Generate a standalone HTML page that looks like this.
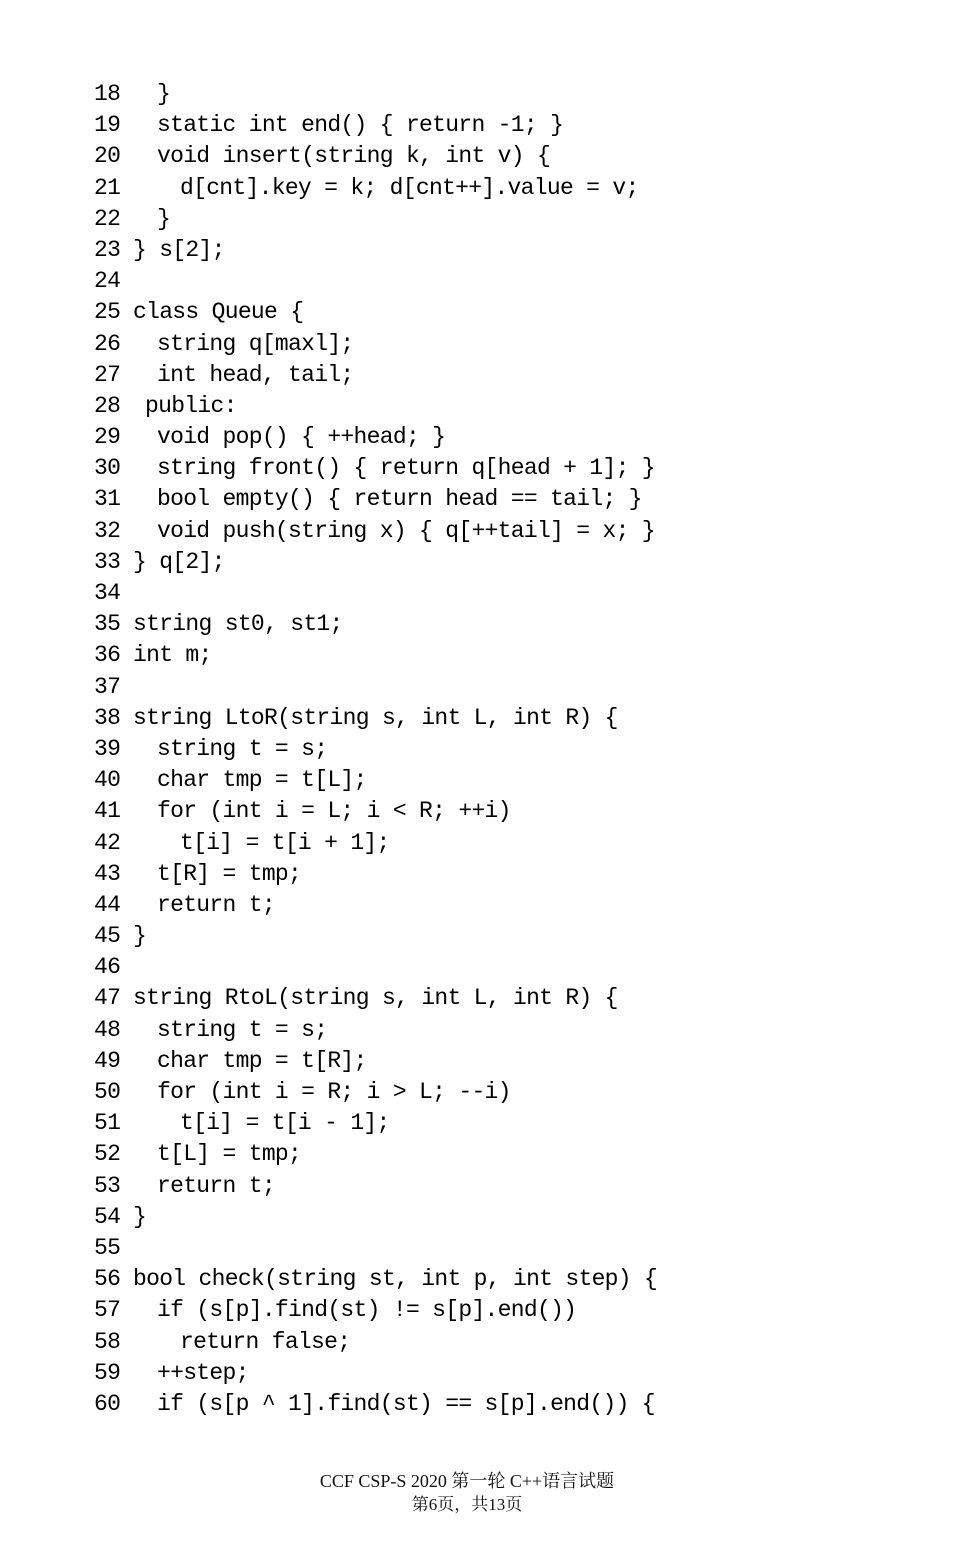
<!DOCTYPE html>
<html><head><meta charset="utf-8"><style>
body{margin:0;background:#fff;width:954px;height:1562px;position:relative;overflow:hidden}
.c{position:absolute;left:0;top:79px;font-family:"Liberation Mono",monospace;font-size:23px;letter-spacing:-0.7px;line-height:31.19px;color:#000}
.l{position:relative;height:31.19px;white-space:pre}
.n{position:absolute;left:94px}
.t{position:absolute}
.f{position:absolute;width:954px;left:-10px;text-align:center;font-family:"Liberation Serif","Noto Serif CJK SC",serif;font-size:18px;color:#111}
</style></head><body>
<div class="c">
<div class="l"><span class="n">18</span><span class="t" style="left:157px">}</span></div>
<div class="l"><span class="n">19</span><span class="t" style="left:157px">static int end() { return -1; }</span></div>
<div class="l"><span class="n">20</span><span class="t" style="left:157px">void insert(string k, int v) {</span></div>
<div class="l"><span class="n">21</span><span class="t" style="left:180px">d[cnt].key = k; d[cnt++].value = v;</span></div>
<div class="l"><span class="n">22</span><span class="t" style="left:157px">}</span></div>
<div class="l"><span class="n">23</span><span class="t" style="left:133px">} s[2];</span></div>
<div class="l"><span class="n">24</span></div>
<div class="l"><span class="n">25</span><span class="t" style="left:133px">class Queue {</span></div>
<div class="l"><span class="n">26</span><span class="t" style="left:157px">string q[maxl];</span></div>
<div class="l"><span class="n">27</span><span class="t" style="left:157px">int head, tail;</span></div>
<div class="l"><span class="n">28</span><span class="t" style="left:145px">public:</span></div>
<div class="l"><span class="n">29</span><span class="t" style="left:157px">void pop() { ++head; }</span></div>
<div class="l"><span class="n">30</span><span class="t" style="left:157px">string front() { return q[head + 1]; }</span></div>
<div class="l"><span class="n">31</span><span class="t" style="left:157px">bool empty() { return head == tail; }</span></div>
<div class="l"><span class="n">32</span><span class="t" style="left:157px">void push(string x) { q[++tail] = x; }</span></div>
<div class="l"><span class="n">33</span><span class="t" style="left:133px">} q[2];</span></div>
<div class="l"><span class="n">34</span></div>
<div class="l"><span class="n">35</span><span class="t" style="left:133px">string st0, st1;</span></div>
<div class="l"><span class="n">36</span><span class="t" style="left:133px">int m;</span></div>
<div class="l"><span class="n">37</span></div>
<div class="l"><span class="n">38</span><span class="t" style="left:133px">string LtoR(string s, int L, int R) {</span></div>
<div class="l"><span class="n">39</span><span class="t" style="left:157px">string t = s;</span></div>
<div class="l"><span class="n">40</span><span class="t" style="left:157px">char tmp = t[L];</span></div>
<div class="l"><span class="n">41</span><span class="t" style="left:157px">for (int i = L; i &lt; R; ++i)</span></div>
<div class="l"><span class="n">42</span><span class="t" style="left:180px">t[i] = t[i + 1];</span></div>
<div class="l"><span class="n">43</span><span class="t" style="left:157px">t[R] = tmp;</span></div>
<div class="l"><span class="n">44</span><span class="t" style="left:157px">return t;</span></div>
<div class="l"><span class="n">45</span><span class="t" style="left:133px">}</span></div>
<div class="l"><span class="n">46</span></div>
<div class="l"><span class="n">47</span><span class="t" style="left:133px">string RtoL(string s, int L, int R) {</span></div>
<div class="l"><span class="n">48</span><span class="t" style="left:157px">string t = s;</span></div>
<div class="l"><span class="n">49</span><span class="t" style="left:157px">char tmp = t[R];</span></div>
<div class="l"><span class="n">50</span><span class="t" style="left:157px">for (int i = R; i &gt; L; --i)</span></div>
<div class="l"><span class="n">51</span><span class="t" style="left:180px">t[i] = t[i - 1];</span></div>
<div class="l"><span class="n">52</span><span class="t" style="left:157px">t[L] = tmp;</span></div>
<div class="l"><span class="n">53</span><span class="t" style="left:157px">return t;</span></div>
<div class="l"><span class="n">54</span><span class="t" style="left:133px">}</span></div>
<div class="l"><span class="n">55</span></div>
<div class="l"><span class="n">56</span><span class="t" style="left:133px">bool check(string st, int p, int step) {</span></div>
<div class="l"><span class="n">57</span><span class="t" style="left:157px">if (s[p].find(st) != s[p].end())</span></div>
<div class="l"><span class="n">58</span><span class="t" style="left:180px">return false;</span></div>
<div class="l"><span class="n">59</span><span class="t" style="left:157px">++step;</span></div>
<div class="l"><span class="n">60</span><span class="t" style="left:157px">if (s[p ^ 1].find(st) == s[p].end()) {</span></div>
</div>
<div class="f" style="top:1467px">CCF CSP-S 2020 第一轮 C++语言试题</div>
<div class="f" style="top:1490px;font-size:17px">第6页，共13页</div>
</body></html>
